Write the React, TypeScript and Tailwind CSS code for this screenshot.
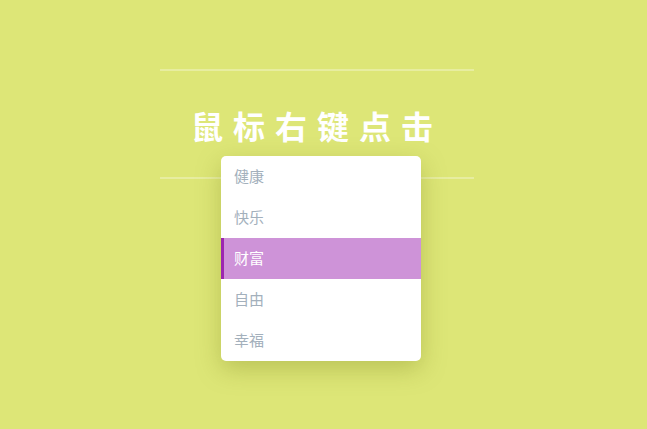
import React from "react";

const items = ["健康", "快乐", "财富", "自由", "幸福"];

const App = () => {
  const active = 2;
  return (
    <div
      className="relative w-full h-[429px] bg-[#dde677] overflow-hidden"
      style={{ fontFamily: '"Noto Sans CJK SC", "Noto Sans", sans-serif' }}
    >
      <div className="flex justify-center pt-[69px] pr-[13px]">
        <div className="w-[314px] h-[110px] border-y-2 border-white/30 flex items-center justify-center">
          <h1 className="text-[32px] font-bold text-white tracking-[10px] leading-none pt-[2px]">
            鼠标右键点击
          </h1>
        </div>
      </div>

      {/* context menu */}
      <ul className="absolute left-[221px] top-[156px] w-[200px] bg-white rounded-[5px] overflow-hidden shadow-[0_8px_24px_rgba(120,130,30,0.35)]">
        {items.map((item, idx) => (
          <li
            key={idx}
            className={
              idx === active
                ? "h-[41px] flex items-center pl-[10px] border-l-[3px] border-[#9c27b0] bg-[#ce93d8] text-white text-[15px]"
                : "h-[41px] flex items-center pl-[13px] text-[#a3b0bc] text-[15px]"
            }
          >
            {item}
          </li>
        ))}
      </ul>
    </div>
  );
};

export default App;
